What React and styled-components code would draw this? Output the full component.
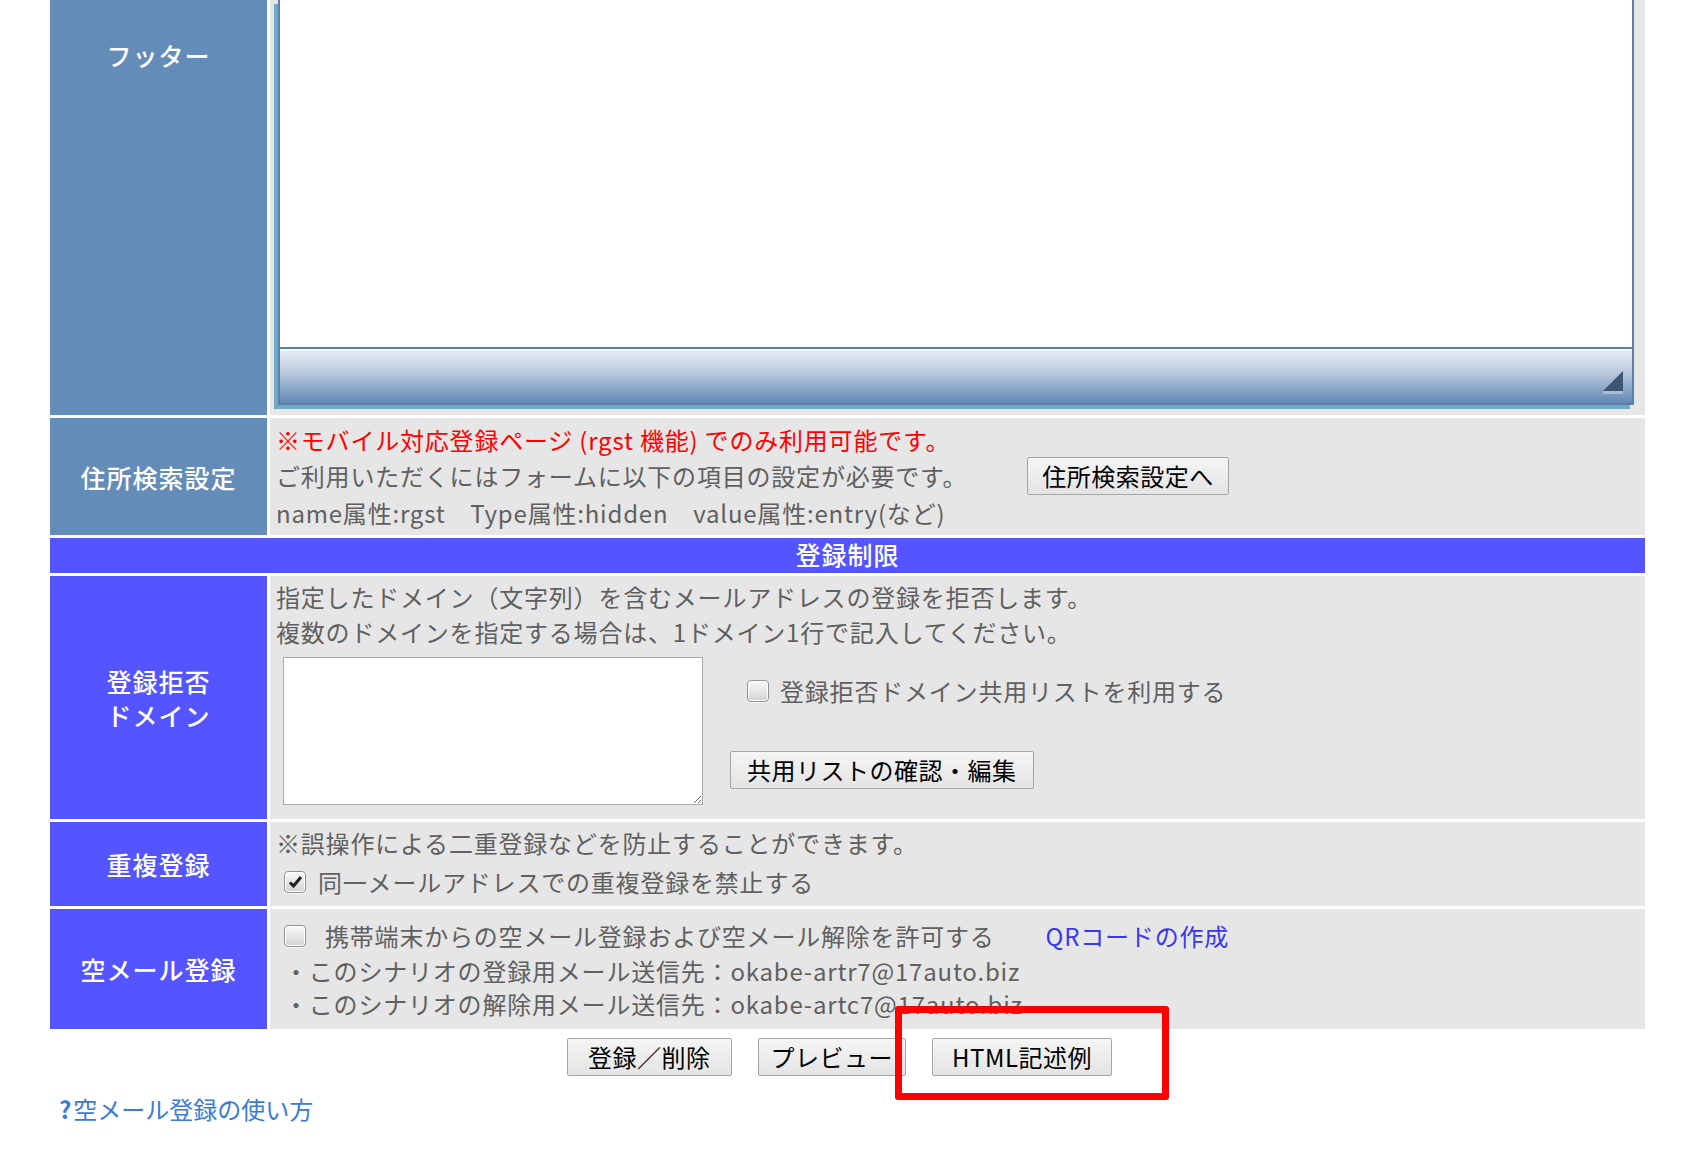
import React from 'react';
import styled, { createGlobalStyle } from 'styled-components';

const GlobalStyle = createGlobalStyle`
  html, body {
    margin: 0;
    padding: 0;
    background: #fff;
  }
  body {
    font-family: "Noto Sans CJK JP", "Noto Sans", sans-serif;
  }
`;

const Page = styled.div`
  position: relative;
  width: 1695px;
  padding: 0 50px 40px 50px;
  box-sizing: border-box;
`;

const FormTable = styled.div`
  display: grid;
  grid-template-columns: 217px 1fr;
  column-gap: 3px;
  row-gap: 3px;
`;

const Th = styled.div`
  background: ${p => (p.$tone === 'steel' ? '#638cb8' : '#5555ff')};
  color: #fff;
  font-size: 25px;
  font-weight: 500;
  letter-spacing: 1px;
  line-height: 34px;
  text-align: center;
  display: flex;
  justify-content: center;
  align-items: ${p => (p.$top ? 'flex-start' : 'center')};
  padding-top: ${p => p.$top || 0};
  height: ${p => p.$height || 'auto'};
  box-sizing: border-box;
`;

const Td = styled.div`
  background: #e6e6e6;
  color: #606060;
  font-size: 24px;
  letter-spacing: 0.8px;
  line-height: 35px;
  padding: ${p => p.$pad || '6px'};
  box-sizing: border-box;
`;

const SectionHead = styled.div`
  grid-column: 1 / -1;
  background: #5555ff;
  color: #fff;
  font-size: 25px;
  font-weight: 500;
  letter-spacing: 1px;
  height: 35px;
  line-height: 33px;
  text-align: center;
`;

/* rich editor frame of the footer row */
const EditorFrame = styled.div`
  display: flex;
  flex-direction: column;
  height: 405px;
  border: 2px solid #5a80a8;
  border-top: 0;
  box-shadow: -4px 4px 0 #6eaac7;
  background: #fff;
  box-sizing: border-box;
`;

const EditorBody = styled.div`
  flex: 1;
  background: #fff;
`;

const EditorBar = styled.div`
  height: 56px;
  box-sizing: border-box;
  border-top: 2px solid #5a80a8;
  box-shadow: inset 0 2px 0 #f4f7fb;
  background: linear-gradient(#e9eef5 0%, #b7c8dc 45%, #6387b5 100%);
  display: flex;
  justify-content: flex-end;
  align-items: flex-end;
  padding: 0 8px 8px 0;
`;

const Line = styled.div`
  color: ${p => p.$color || 'inherit'};
  line-height: ${p => p.$lh || '35px'};
  padding-left: ${p => p.$indent || 0};
  display: flex;
  align-items: center;
  white-space: nowrap;
`;

const Button = styled.button`
  height: 38px;
  padding: 0 ${p => p.$px || '16px'};
  margin-left: ${p => p.$ml || 0};
  font-family: "Noto Sans CJK JP", "Noto Sans", sans-serif;
  font-size: 24px;
  letter-spacing: 0.5px;
  color: #000;
  background: linear-gradient(#f5f5f5, #e4e4e4);
  border: 1px solid #a6a6a6;
  border-radius: 2px;
  line-height: 36px;
  cursor: pointer;
`;

const CheckRow = styled.label`
  display: flex;
  align-items: center;
  gap: ${p => p.$gap || '12px'};
  line-height: 36px;
  margin-top: ${p => p.$mt || 0};
  padding-left: ${p => p.$indent || 0};
  white-space: nowrap;
`;

const CheckBox = styled.span`
  display: inline-flex;
  align-items: center;
  justify-content: center;
  width: 22px;
  height: 22px;
  border: 1px solid #939393;
  border-radius: 4px;
  background: linear-gradient(#fbfbfb, #d2d2d2);
  box-shadow: inset 0 0 0 1px #fff, 0 1px 0 #f4f4f4;
  box-sizing: border-box;
  flex-shrink: 0;
`;

const DomainArea = styled.div`
  display: flex;
  gap: 27px;
  margin-top: 8px;
  padding-left: 7px;
`;

const DomainText = styled.textarea`
  display: block;
  width: 420px;
  height: 148px;
  border: 1px solid #a9a9a9;
  background: #fff;
  box-sizing: border-box;
  resize: both;
  font-family: inherit;
`;

const DomainSide = styled.div`
  display: flex;
  flex-direction: column;
  align-items: flex-start;
  gap: 42px;
  padding-top: 16px;
`;

const QrLink = styled.a`
  color: #3838f0;
  text-decoration: none;
  margin-left: 32px;
  cursor: pointer;
`;

const Actions = styled.div`
  display: flex;
  justify-content: center;
  gap: 26px;
  margin-top: 9px;
  padding-right: 16px;
`;

const HelpLink = styled.a`
  display: inline-block;
  margin-top: 18px;
  padding-left: 9px;
  font-size: 24px;
  line-height: 30px;
  color: #3a7bd8;
  text-decoration: none;
  cursor: pointer;
`;

const HelpMark = styled.span`
  font-weight: bold;
  margin-right: 2px;
`;

const Highlight = styled.div`
  position: absolute;
  left: 895px;
  top: 1006px;
  width: 274px;
  height: 94px;
  border: 7px solid #ff0000;
  border-radius: 3px;
  box-sizing: border-box;
  pointer-events: none;
`;

const Grip = () => (
  <svg width="22" height="24" viewBox="0 0 22 24">
    <polygon points="21,0 21,20 1,20" fill="#3c5673" />
    <rect x="1" y="20" width="20" height="3" fill="#a8bdd4" />
  </svg>
);

const Check = ({ checked }) => (
  <CheckBox>
    {checked && (
      <svg width="15" height="14" viewBox="0 0 15 14">
        <path d="M2 7.5 L5.5 11 L13 2" fill="none" stroke="#1e1e1e" strokeWidth="3" />
      </svg>
    )}
  </CheckBox>
);

export default function App() {
  return (
    <>
      <GlobalStyle />
      <Page>
        <FormTable>
          <Th $tone="steel" $top="38px" $height="415px">フッター</Th>
          <Td $pad="0 11px 10px 8px">
            <EditorFrame>
              <EditorBody />
              <EditorBar>
                <Grip />
              </EditorBar>
            </EditorFrame>
          </Td>

          <Th $tone="steel">住所検索設定</Th>
          <Td $pad="4px 6px 5px">
            <Line $color="#ff0000">※モバイル対応登録ページ (rgst 機能) でのみ利用可能です。</Line>
            <Line $lh="38px">
              ご利用いただくにはフォームに以下の項目の設定が必要です。
              <Button $ml="60px" $px="14px">住所検索設定へ</Button>
            </Line>
            <Line>name属性:rgst　Type属性:hidden　value属性:entry(など)</Line>
          </Td>

          <SectionHead>登録制限</SectionHead>

          <Th>登録拒否<br />ドメイン</Th>
          <Td $pad="3px 6px 14px">
            <Line>指定したドメイン（文字列）を含むメールアドレスの登録を拒否します。</Line>
            <Line>複数のドメインを指定する場合は、1ドメイン1行で記入してください。</Line>
            <DomainArea>
              <DomainText />
              <DomainSide>
                <CheckRow $indent="17px" $gap="11px">
                  <Check />
                  登録拒否ドメイン共用リストを利用する
                </CheckRow>
                <Button>共用リストの確認・編集</Button>
              </DomainSide>
            </DomainArea>
          </Td>

          <Th>重複登録</Th>
          <Td $pad="3px 6px 6px">
            <Line $lh="36px">※誤操作による二重登録などを防止することができます。</Line>
            <CheckRow $indent="8px" $mt="3px">
              <Check checked />
              同一メールアドレスでの重複登録を禁止する
            </CheckRow>
          </Td>

          <Th>空メール登録</Th>
          <Td $pad="9px 6px 9px">
            <CheckRow $indent="8px" $gap="19px">
              <Check />
              携帯端末からの空メール登録および空メール解除を許可する
              <QrLink>QRコードの作成</QrLink>
            </CheckRow>
            <Line $lh="33px" $indent="8px">・このシナリオの登録用メール送信先：okabe-artr7@17auto.biz</Line>
            <Line $lh="33px" $indent="8px">・このシナリオの解除用メール送信先：okabe-artc7@17auto.biz</Line>
          </Td>
        </FormTable>

        <Actions>
          <Button $px="20px">登録／削除</Button>
          <Button $px="12px">プレビュー</Button>
          <Button $px="19px">HTML記述例</Button>
        </Actions>

        <HelpLink><HelpMark>?</HelpMark>空メール登録の使い方</HelpLink>

        <Highlight />
      </Page>
    </>
  );
}
